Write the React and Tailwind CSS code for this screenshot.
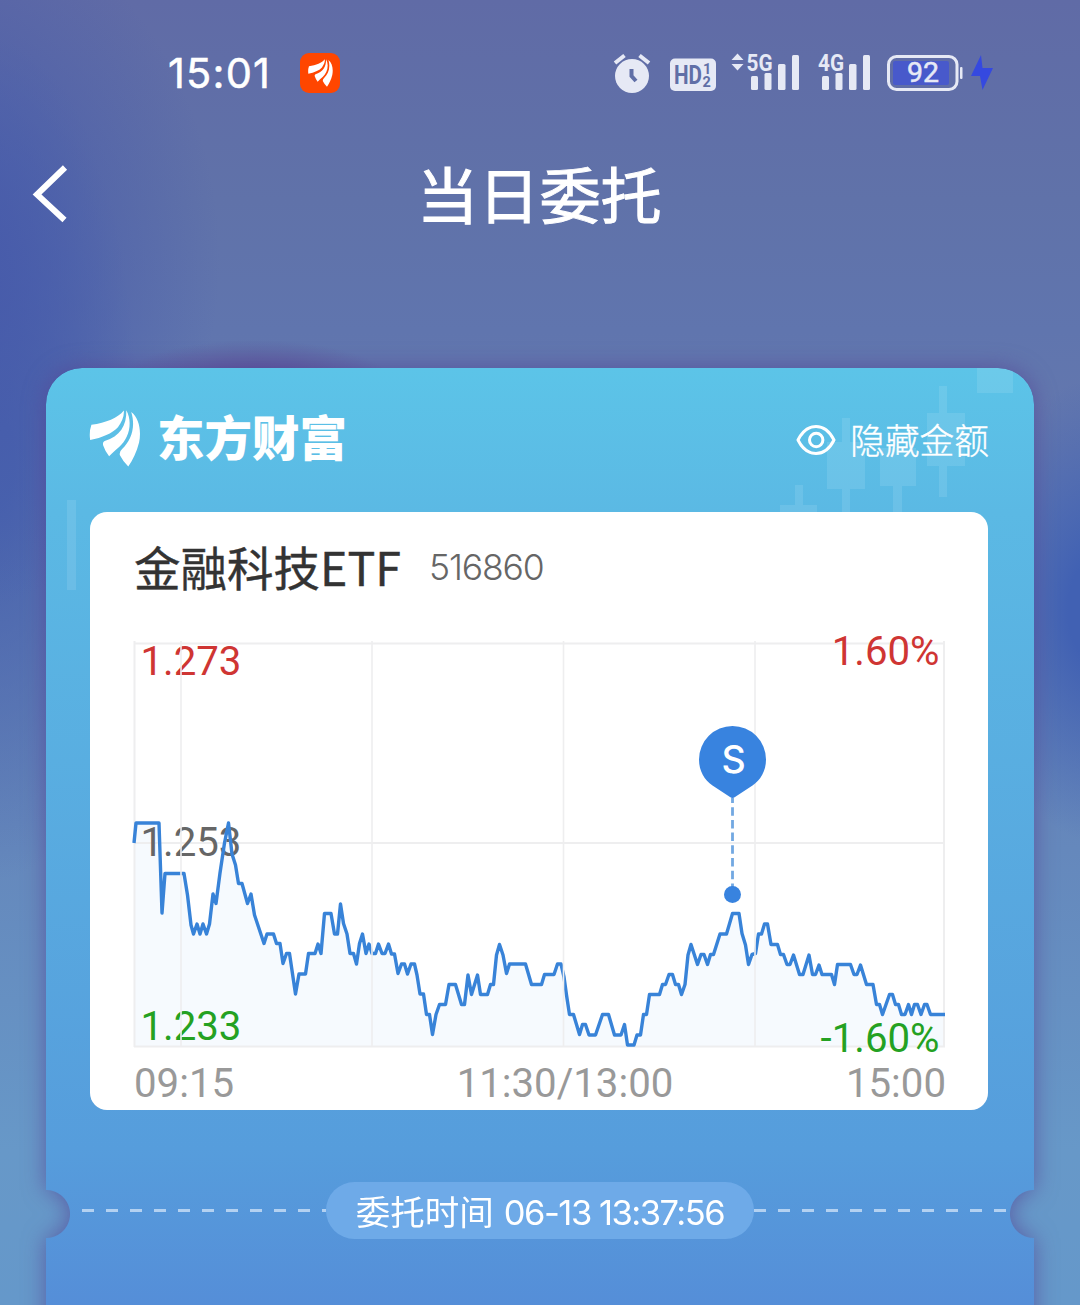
import React from 'react';

const PRICE_LINE = [
  '134,843 136,823 159,823 162,913 165,873.5 184,873.5 187.5,895 191,925 193.5,934 197,924 200,934 203,924 206.5,934 209.5,924',
  '213,894 216,903.5 220,873 224.5,843 228.5,823 232,854 235.5,865 238.5,883.5 242,883.5 247.5,903.5 251,894 254.5,915 264,943.5',
  '267,934 273.5,934 276.5,943.5 280,943.5 283,963.5 286.5,953.5 289.5,953.5 295.5,994 299,974 305.5,974 308.5,953.5 315,953.5',
  '318,944 321,953.5 324.5,913.5 331,913.5 334.5,934 337.5,934 340.5,904 343.5,923.5 347,934 350,953.5 353.5,953.5 356.5,964',
  '359.5,943.5 362.5,934 366,953.5 369,944 372,953.5 375.5,953.5 378.5,944 382,953.5 385,953.5 388.5,944 391.5,954 394.5,954',
  '398,973.5 401.5,964 404.5,964 407.5,974 411,964 414.5,964 417,975 420,994 423.5,994 426.5,1014.5 429.5,1014.5 432.5,1034.5',
  '436,1014.5 439.5,1004.5 445.5,1004.5 449,984.5 455.5,984.5 461.5,1004.5 464.5,1004.5 468,975 471.5,994.5 477.5,975 480.5,994.5',
  '487.5,994.5 490.5,984.5 493.5,984.5 496.5,955 499.5,944.5 503,955 506.5,973.5 509.5,964 525.5,964 531.5,984.5 541.5,984.5',
  '544.5,974.5 554,974.5 557.5,964 561,964 564,977 566.5,995 569.5,1014.5 573.5,1014.5 579.5,1034.5 582.5,1024.5 585.5,1024.5',
  '589,1035 595.5,1035 602.5,1014.5 608.5,1014.5 614.5,1035 621,1035 624.5,1024.5 627.5,1045 634,1045 637,1035 640.5,1035',
  '643.5,1014.5 646.5,1014.5 649.5,994.5 659.5,994.5 662.5,984.5 665.5,984.5 669,974.5 672.5,974.5 675.5,984.5 678.5,984.5',
  '681.5,994.5 685,984.5 688,955 691,944.5 697.5,964.5 701,954.5 704,954.5 707.5,964.5 710.5,954.5 713.5,954.5 720,934 726.5,934',
  '732.5,913.5 739,913.5 742,933.5 745.5,945 748.5,964.5 752,954.5 755.5,953.5 758.5,934 761.5,934 764.5,924 767.5,924 771,944.5',
  '777.5,944.5 780.5,954.5 783.5,954.5 787,964.5 790,964.5 793.5,955 799.5,974.5 803,974.5 809,955 812.5,974.5 815.5,974.5',
  '819,965 822,974.5 831.5,974.5 834.5,984.5 837.5,964.5 850.5,964.5 854,974.5 857,974.5 860.5,965 866.5,984.5 873,984.5',
  '876.5,1004.5 879.5,1004.5 882.5,1014.5 889.5,994.5 892.5,994.5 895.5,1004.5 898.5,1004.5 901.5,1014.5 905,1014.5 908.5,1004.5',
  '911.5,1014.5 914.5,1004.5 917.5,1004.5 921,1014.5 924.5,1004.5 927,1004.5 930.5,1014.5 945,1014.5',
].join(' ');

function BrandMark({ className }) {
  return (
    <svg viewBox="0 0 52 58" className={className} fill="currentColor">
      <path d="M35 .5C29 8 17 13 2 15Q-.5 22 .7 30.500C13 28 23 24 29 17.500C33 12 35.500 7 35 .5Z" />
      <path d="M37.500 .3C38 16 31 27 15.500 31.500Q13 33 14 36Q16 42 20 47C28 39 34 36 38 27C42 19 42 8 37.500 .3Z" />
      <path d="M42.500 2C50.500 8 53 21 50.500 33C48 43 44 51 39.500 57.500Q34 52 31 46Q30 42.500 33.500 39.500C42 31 47.500 18 42.500 2Z" />
    </svg>
  );
}

function SignalBars() {
  return (
    <>
      <rect x="0" y="21" width="7" height="14" rx="1.500" />
      <rect x="13.500" y="18" width="7" height="17" rx="1.500" />
      <rect x="27" y="9" width="7.500" height="26" rx="1.500" />
      <rect x="41" y="0" width="7" height="35" rx="1.500" />
    </>
  );
}

function StatusBar() {
  return (
    <div className="flex h-[146px] pl-[168px] text-white">
      <div className="mt-[43px] h-[60px] w-[132px] font-['Inter'] text-[41.500px] leading-[60px] tracking-[1.2px] [-webkit-text-stroke:0.5px_#fff]">15:01</div>
      <div className="mt-[53px] flex h-10 w-10 items-center justify-center rounded-[9px] bg-[#ff4600]">
        <BrandMark className="h-[28px] w-[25px]" />
      </div>
      <svg viewBox="600 40 400 70" className="mt-10 ml-[260px] h-[70px] w-[400px] font-['Roboto']" fill="#e6e9f5">
        {/* Alarm */}
        <circle cx="632" cy="76" r="17" />
        <path d="M615 63L624.500 55.500M649 63L639.500 55.500" stroke="#e6e9f5" strokeWidth="4" />
        <path d="M631.500 69V76L636 81" fill="none" stroke="#606fa7" strokeWidth="4" />
        {/* HD voice */}
        <rect x="670" y="58.500" width="46" height="32.500" rx="5" />
        <g fill="#606fa7" fontWeight="700">
          <text x="674" y="84" fontSize="25" textLength="28" lengthAdjust="spacingAndGlyphs">HD</text>
          <text x="703" y="73.500" fontSize="14.500">1</text>
          <text x="702.500" y="87" fontSize="14.500">2</text>
        </g>
        {/* SIM 1 */}
        <path d="M731.500 60L737.500 53.500L743.500 60ZM731.500 64L737.500 70.500L743.500 64Z" />
        <text x="746.500" y="71" fontSize="24.500" fontWeight="700" textLength="26" lengthAdjust="spacingAndGlyphs">5G</text>
        <g transform="translate(751 55)"><SignalBars /></g>
        {/* SIM 2 */}
        <text x="818" y="71" fontSize="24.500" fontWeight="700" textLength="26" lengthAdjust="spacingAndGlyphs">4G</text>
        <g transform="translate(822 55)"><SignalBars /></g>
        {/* Battery */}
        <rect x="888.500" y="56.500" width="68.500" height="33" rx="8" fill="none" stroke="#e6e9f5" strokeWidth="3" />
        <rect x="893" y="61" width="56" height="24" rx="2" fill="#4859cb" />
        <rect x="960" y="67" width="2.500" height="12" rx="1" />
        <text x="907" y="82" fontSize="27.500" stroke="#e6e9f5" strokeWidth="0.500" textLength="32" lengthAdjust="spacingAndGlyphs">92</text>
        <path d="M981 55L971 76H980L982.500 90L993 68H982.500Z" fill="#3549e0" />
      </svg>
    </div>
  );
}

function NavBar() {
  return (
    <div className="flex h-[222px] items-start text-white">
      <svg viewBox="0 0 36 58" className="mt-[19px] ml-8 h-[58px] w-9 shrink-0" fill="none" stroke="currentColor" strokeWidth="6">
        <path d="M33 2.500L5 29.500L32.500 55" />
      </svg>
      <h1 className="mt-[12px] ml-[349px] text-[61.200px] leading-[70px] font-normal whitespace-nowrap [-webkit-text-stroke:1px_#fff]">当日委托</h1>
    </div>
  );
}

function Candles() {
  return (
    <svg viewBox="0 0 988 230" className="absolute top-0 left-0 h-[230px] w-[988px] fill-white/10">
      <path d="M749 117h8v20h14v20h-37v-20h15z" />
      <path d="M796 50h8v24h15v47h-15v40h-8v-40h-15v-47h15z" />
      <path d="M834 80h36v38h-14v43h-9v-43h-13z" />
      <path d="M893 18h8v27h18v53h-18v31h-8v-31h-12v-53h12z" />
      <path d="M931 0h36v25h-36zM21 132h9v90h-9z" />
    </svg>
  );
}

function CardHeader() {
  return (
    <div className="relative flex h-[144px] pr-[45px] pl-[43px] text-white">
      <BrandMark className="mt-[42px] h-[57px] w-[52px]" />
      <span className="mt-[33px] ml-4 text-[47.500px] leading-[70px] font-black">东方财富</span>
      <button className="mt-[46px] ml-auto flex h-[52px] items-center">
        <svg viewBox="0 0 40 32" className="mr-[14px] h-8 w-10" fill="none" stroke="currentColor" strokeWidth="3">
          <path d="M2 16C11 -2 29 -2 38 16C29 34 11 34 2 16Z" strokeLinejoin="round" />
          <circle cx="20.200" cy="16" r="6.700" />
        </svg>
        <span className="-mt-[3px] text-[34.700px] leading-[52px] font-light [-webkit-text-stroke:0.4px_#fff]">隐藏金额</span>
      </button>
    </div>
  );
}

function Chart() {
  return (
    <svg viewBox="130 612 820 450" className="ml-10 block h-[450px] w-[820px] shrink-0 font-['Roboto']">
      <polygon points={`134,1046 ${PRICE_LINE} 945,1046`} fill="#f6fafe" />
      <path d="M134 643.500H945M134 843H945M134 1046.500H945M134.500 641V1047M944 641V1047" stroke="#eeeeef" strokeWidth="2" />
      <g fontSize="40.200">
        <text x="140.500" y="675" fill="#cf3533">1.273</text>
        <text x="140.500" y="855.500" fill="#666">1.253</text>
        <text x="140.500" y="1040" fill="#24a122">1.233</text>
        <text x="939.500" y="665" textAnchor="end" fill="#cf3533">1.60%</text>
        <text x="939.500" y="1052" textAnchor="end" fill="#24a122">-1.60%</text>
      </g>
      <polyline points={PRICE_LINE} fill="none" stroke="#3883d8" strokeWidth="3.400" strokeLinejoin="round" />
      <path d="M181 641V1047M372 641V1047M563.500 641V1047M755 641V1047" stroke="#eeeeef" strokeWidth="1.600" />
      {/* Sell marker */}
      <path d="M732.500 798V888" stroke="#72a8e2" strokeWidth="2.800" strokeDasharray="8.500 4.200" strokeDashoffset="3.500" />
      <circle cx="732.500" cy="894.500" r="8.500" fill="#3883df" />
      <path d="M732.500 726A33.500 33.500 0 0 1 766 759.500C766 771 760.500 780 752.500 785.500L735 797Q732.500 799 730 797L712.500 785.500C704.500 780 699 771 699 759.500A33.500 33.500 0 0 1 732.500 726Z" fill="#3883df" />
      <text x="733.700" y="773" textAnchor="middle" fontSize="37.500" fontWeight="500" fill="#fff" className="font-['Inter']">S</text>
    </svg>
  );
}

function QuotePanel() {
  return (
    <div className="relative ml-11 flex h-[598px] w-[898px] flex-col overflow-hidden rounded-[17px] bg-white">
      <div className="flex h-[100px] shrink-0 items-start pt-[19px] pl-11">
        <h2 className="text-[46.500px] leading-[70px] text-[#333] [-webkit-text-stroke:0.4px_#333]">金融科技ETF</h2>
        <span className="ml-[28px] font-['Inter'] text-[35.500px] leading-[74px] font-light tracking-[-1.1px] text-[#666]">516860</span>
      </div>
      <Chart />
      <div className="flex justify-between pr-[42px] pl-[44px] font-['Roboto'] text-[40.200px] leading-[44px] text-[#999]">
        <span>09:15</span>
        <span className="ml-[50px]">11:30/13:00</span>
        <span>15:00</span>
      </div>
    </div>
  );
}

function OrderTime() {
  return (
    <div className="relative mt-[72px] flex h-[57px] items-center pl-9">
      <div className="h-[3px] w-[244px] bg-[repeating-linear-gradient(90deg,#b3d1f1_0_12px,transparent_12px_24px)]" />
      <div className="flex h-[57px] w-[428px] items-center justify-center rounded-full bg-[#6eaae8] leading-[57px] whitespace-nowrap text-white">
        <span className="text-[34.500px]">委托时间</span>
        <span className="mt-[3px] ml-[10px] font-['Inter'] text-[34.500px] tracking-[-1.5px]">06-13 13:37:56</span>
      </div>
      <div className="h-[3px] w-[252px] bg-[repeating-linear-gradient(90deg,#b3d1f1_0_12px,transparent_12px_24px)]" />
    </div>
  );
}

export default function App() {
  return (
    <div className="h-[1305px] w-[1080px] overflow-hidden bg-[radial-gradient(ellipse_140px_45px_at_255px_385px,#5c569b_30%,transparent_100%),radial-gradient(ellipse_300px_360px_at_-80px_260px,#4659aa_10%,transparent_100%),radial-gradient(ellipse_110px_230px_at_1090px_610px,#4161b3_20%,transparent_100%),radial-gradient(ellipse_140px_420px_at_0px_460px,#4863ae_10%,transparent_100%),linear-gradient(180deg,#606ba6_0,#6072a9_200px,#6075ae_330px,#6478ae_450px,#6588bc_850px,#6798c8_1150px,#6598ca_1305px)] font-['Noto_Sans_CJK_SC',sans-serif]">
      <StatusBar />
      <NavBar />
      <div className="[filter:drop-shadow(0_0_11px_rgba(84,68,150,0.7))]">
        {/* Ticket card, with a round notch punched out of each side */}
        <div className="relative mx-auto h-[977px] w-[988px] overflow-hidden rounded-t-[36px] bg-[linear-gradient(180deg,#5cc4e8_0,#5bb9e4_144px,#569ddc_780px,#558ed8_937px)] [mask-composite:intersect] [mask-image:radial-gradient(circle_at_0_846px,transparent_23.5px,#000_24.5px),radial-gradient(circle_at_100%_846px,transparent_23.5px,#000_24.5px)]">
          <Candles />
          <CardHeader />
          <QuotePanel />
          <OrderTime />
        </div>
      </div>
    </div>
  );
}
